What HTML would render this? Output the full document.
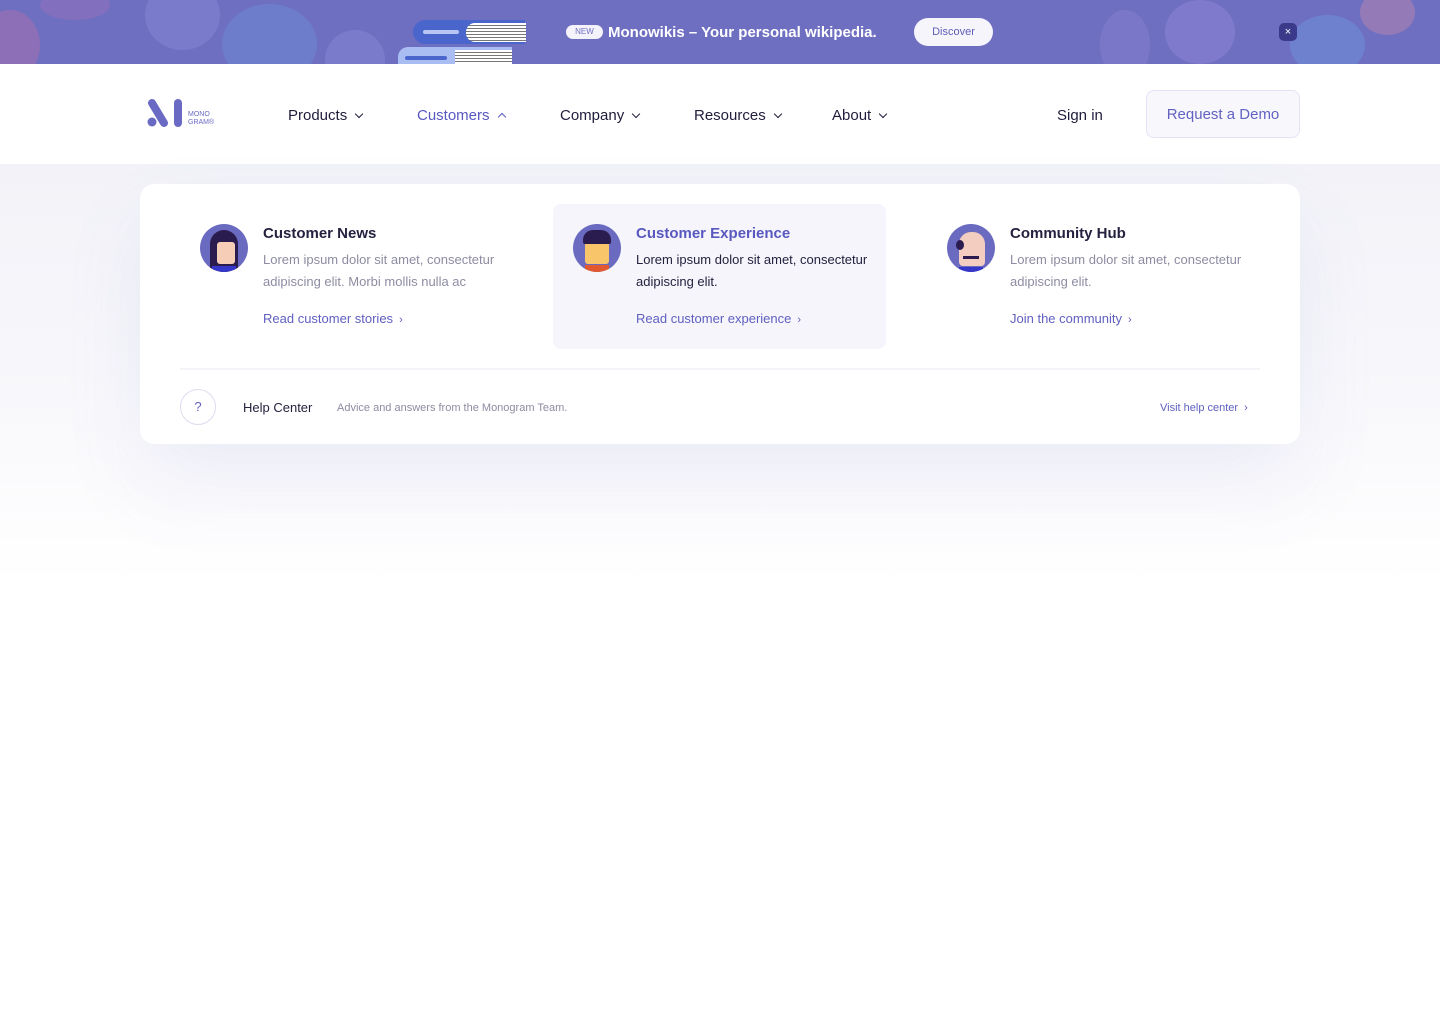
<!DOCTYPE html>
<html><head><meta charset="utf-8"><style>
*{margin:0;padding:0;box-sizing:border-box}
body{width:1440px;height:1024px;background:#fff;font-family:"Liberation Sans",sans-serif;position:relative;overflow:hidden}
.banner{position:absolute;left:0;top:0;width:1440px;height:64px;background:#6f6fc2;overflow:hidden}
.blob{position:absolute;border-radius:50%;opacity:.45}
.nav{position:absolute;top:64px;left:0;width:1440px;height:100px;background:#fff}
.ni{position:absolute;top:107px;font-size:15px;color:#1f1d3a}
.chev{display:inline-block;width:6px;height:6px;border-right:1.5px solid currentColor;border-bottom:1.5px solid currentColor;transform:rotate(45deg);margin-left:9px;position:relative;top:-3px}
.up{transform:rotate(-135deg);top:0}
.below{position:absolute;top:164px;left:0;width:1440px;height:860px;background:linear-gradient(#f2f2f8 0,#f7f7fb 200px,#fff 420px)}
.card{position:absolute;left:140px;top:184px;width:1160px;height:260px;background:#fff;border-radius:14px;box-shadow:0 40px 80px rgba(120,120,200,.10)}
.hl{position:absolute;left:553px;top:204px;width:333px;height:145px;background:#f5f5fb;border-radius:8px}
.av{position:absolute;width:48px;height:48px;border-radius:50%;background:#6a6ac0;overflow:hidden}
.t{position:absolute;font-size:15px;font-weight:bold;color:#24223f}
.d{position:absolute;font-size:13px;line-height:22px;color:#8d8ca2;width:260px}
.l{position:absolute;font-size:13px;color:#6060c0}
.sc{font-size:11px;margin-left:6px}
</style></head><body>
<div class="banner">
 <div class="blob" style="left:-20px;top:10px;width:60px;height:70px;background:#b06fa8"></div>
 <div class="blob" style="left:40px;top:-10px;width:70px;height:30px;background:#9a6fb8"></div>
 <div class="blob" style="left:145px;top:-20px;width:75px;height:70px;background:#8a8ad8"></div>
 <div class="blob" style="left:222px;top:4px;width:95px;height:80px;background:#6a8fd8"></div>
 <div class="blob" style="left:325px;top:30px;width:60px;height:60px;background:#8a8ad8"></div>
 <div class="blob" style="left:1100px;top:10px;width:50px;height:70px;background:#8a80d0"></div>
 <div class="blob" style="left:1165px;top:0;width:70px;height:64px;background:#9288d8"></div>
 <div class="blob" style="left:1290px;top:15px;width:75px;height:60px;background:#6a96e0"></div>
 <div class="blob" style="left:1360px;top:-10px;width:55px;height:45px;background:#c088a8"></div>
 <div style="position:absolute;left:413px;top:20px;width:112px;height:24px;background:#4a65cc;border-radius:12px 0 0 12px"></div>
 <div style="position:absolute;left:423px;top:30px;width:36px;height:4px;background:#b8c4f4;border-radius:2px"></div>
 <div style="position:absolute;left:466px;top:23px;width:60px;height:19px;background:repeating-linear-gradient(#fff 0 2px,#777 2px 3px);border-radius:9px 0 0 9px"></div>
 <div style="position:absolute;left:398px;top:47px;width:114px;height:20px;background:#a9bdf2;border-radius:10px 0 0 0"></div>
 <div style="position:absolute;left:405px;top:56px;width:42px;height:4px;background:#4a65cc;border-radius:2px"></div>
 <div style="position:absolute;left:455px;top:50px;width:57px;height:14px;background:repeating-linear-gradient(#fff 0 2px,#777 2px 3px)"></div>
 <div style="position:absolute;left:566px;top:25px;width:37px;height:14px;background:#f4f3fb;border-radius:7px;font-size:8px;color:#6f6fc2;text-align:center;line-height:14px">NEW</div>
 <div style="position:absolute;left:608px;top:24px;font-size:15px;font-weight:bold;color:#fff">Monowikis – Your personal wikipedia.</div>
 <div style="position:absolute;left:914px;top:18px;width:79px;height:28px;background:#f6f5fc;border-radius:14px;font-size:11px;color:#6060b8;text-align:center;line-height:28px">Discover</div>
 <div style="position:absolute;left:1279px;top:23px;width:18px;height:18px;background:#3b3a8a;border-radius:5px;color:#fff;font-size:11px;text-align:center;line-height:18px">×</div>
</div>
<div class="nav"></div>
<svg style="position:absolute;left:146px;top:98px" width="40" height="30" viewBox="0 0 40 30"><circle cx="6" cy="24" r="4.5" fill="#6a6ac4"/><path d="M6 5 L18 25" stroke="#6a6ac4" stroke-width="8" stroke-linecap="round"/><path d="M32 5 V25" stroke="#6a6ac4" stroke-width="8" stroke-linecap="round"/></svg>
<div style="position:absolute;left:188px;top:111px;font-size:7px;line-height:8px;color:#6a6ac4">MONO<br>GRAM®</div>
<div class="ni" style="left:288px">Products<span class="chev"></span></div>
<div class="ni" style="left:417px;color:#5858c0">Customers<span class="chev up"></span></div>
<div class="ni" style="left:560px">Company<span class="chev"></span></div>
<div class="ni" style="left:694px">Resources<span class="chev"></span></div>
<div class="ni" style="left:832px">About<span class="chev"></span></div>
<div class="ni" style="left:1057px">Sign in</div>
<div style="position:absolute;left:1146px;top:90px;width:154px;height:48px;border:1px solid #e4e3f3;background:#f7f7fc;border-radius:8px;font-size:15px;color:#6262c2;text-align:center;line-height:48px">Request a Demo</div>
<div class="below"></div>
<div class="card"></div>
<div class="hl"></div>
<div class="av" style="left:200px;top:224px"><div style="position:absolute;left:10px;top:6px;width:28px;height:42px;background:#2a1c4e;border-radius:14px 14px 0 0"></div><div style="position:absolute;left:17px;top:18px;width:18px;height:22px;background:#f6cdb7;border-radius:3px"></div><div style="position:absolute;left:12px;top:42px;width:24px;height:8px;background:#3437c8"></div></div>
<div class="av" style="left:573px;top:224px"><div style="position:absolute;left:12px;top:16px;width:24px;height:24px;background:#f8c56a;border-radius:3px"></div><div style="position:absolute;left:10px;top:6px;width:28px;height:14px;background:#2a1c4e;border-radius:10px 10px 2px 2px"></div><div style="position:absolute;left:12px;top:41px;width:24px;height:8px;background:#e2582f"></div></div>
<div class="av" style="left:947px;top:224px"><div style="position:absolute;left:12px;top:8px;width:26px;height:34px;background:#f3cdc0;border-radius:12px 12px 4px 4px"></div><div style="position:absolute;left:9px;top:16px;width:8px;height:10px;background:#2a1c4e;border-radius:50%"></div><div style="position:absolute;left:16px;top:32px;width:16px;height:3px;background:#2a1c4e"></div><div style="position:absolute;left:12px;top:43px;width:24px;height:6px;background:#3437c8"></div></div>
<div class="t" style="left:263px;top:225px">Customer News</div>
<div class="d" style="left:263px;top:249px">Lorem ipsum dolor sit amet, consectetur adipiscing elit. Morbi mollis nulla ac</div>
<div class="l" style="left:263px;top:311px">Read customer stories<span class="sc">›</span></div>
<div class="t" style="left:636px;top:225px;color:#5858c0">Customer Experience</div>
<div class="d" style="left:636px;top:249px;color:#24223f">Lorem ipsum dolor sit amet, consectetur adipiscing elit.</div>
<div class="l" style="left:636px;top:311px">Read customer experience<span class="sc">›</span></div>
<div class="t" style="left:1010px;top:225px">Community Hub</div>
<div class="d" style="left:1010px;top:249px">Lorem ipsum dolor sit amet, consectetur adipiscing elit.</div>
<div class="l" style="left:1010px;top:311px">Join the community<span class="sc">›</span></div>
<div style="position:absolute;left:180px;top:368px;width:1080px;height:2px;background:#f4f4f9"></div>
<div style="position:absolute;left:180px;top:389px;width:36px;height:36px;border:1px solid #dcdcf0;border-radius:50%;font-size:13px;color:#6060c0;text-align:center;line-height:34px">?</div>
<div style="position:absolute;left:243px;top:400px;font-size:13px;color:#24223f">Help Center</div>
<div style="position:absolute;left:337px;top:402px;font-size:11px;color:#8d8ca2">Advice and answers from the Monogram Team.</div>
<div style="position:absolute;left:1160px;top:402px;font-size:11px;color:#6060c0">Visit help center<span class="sc">›</span></div>
</body></html>
